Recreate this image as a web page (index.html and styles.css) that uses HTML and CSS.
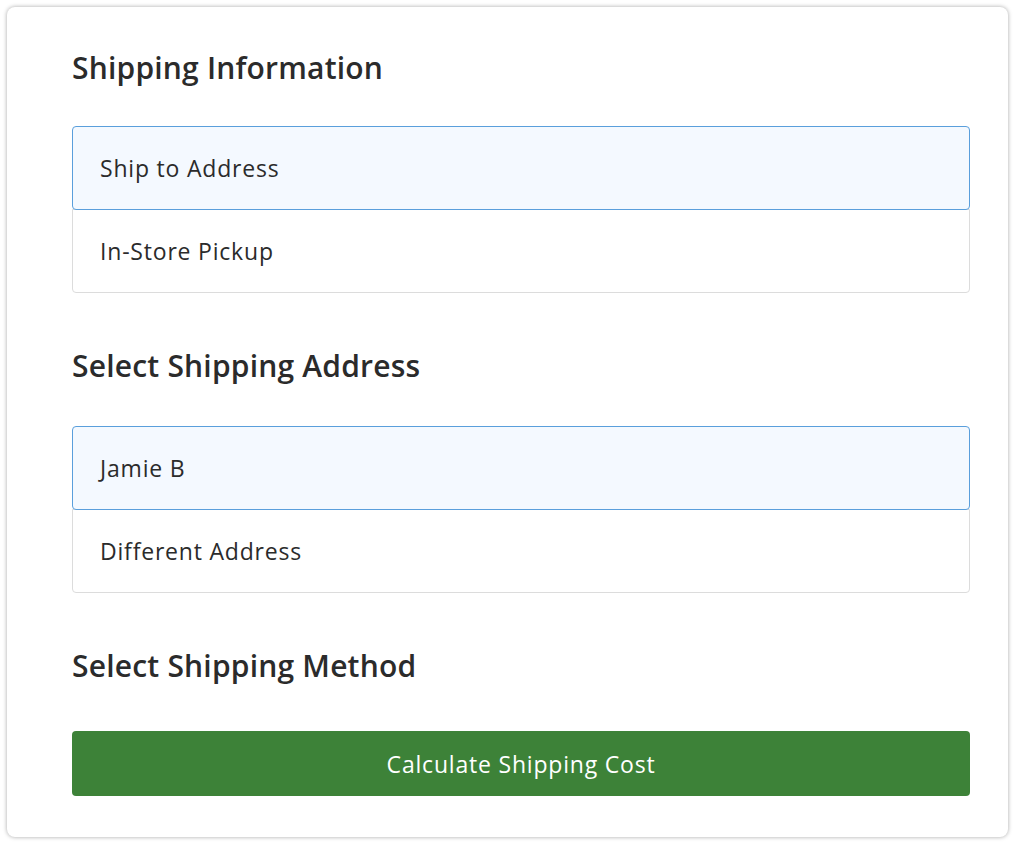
FILE: index.html
```html
<!DOCTYPE html>
<html lang="en">
<head>
<meta charset="utf-8">
<title>Shipping</title>
<link rel="stylesheet" href="styles.css">
</head>
<body>
<div class="card">
  <h2 class="heading h-first">Shipping Information</h2>
  <div class="list">
    <div class="item active">Ship to Address</div>
    <div class="item">In-Store Pickup</div>
  </div>
  <h2 class="heading h-second">Select Shipping Address</h2>
  <div class="list">
    <div class="item active">Jamie B</div>
    <div class="item">Different Address</div>
  </div>
  <h2 class="heading h-third">Select Shipping Method</h2>
  <button class="btn">Calculate Shipping Cost</button>
</div>
</body>
</html>
```

FILE: styles.css
```css
html, body {
  margin: 0;
  padding: 0;
  background: #ffffff;
}
body {
  padding: 7px 8px 8px 7px;
  font-family: "Open Sans", "Liberation Sans", sans-serif;
  color: #2b2b2b;
}
.card {
  background: #fff;
  border-radius: 8px;
  box-shadow: 0 0 4px rgba(0,0,0,0.35);
  padding: 43px 38px 41px 65px;
  height: 830px;
  box-sizing: border-box;
}
.heading {
  margin: 0;
  font-size: 30px;
  line-height: 36px;
  font-weight: 600;
  letter-spacing: 0.2px;
  color: #2b2b2b;
}
.h-first { margin-bottom: 40px; }
.h-second { margin-top: 55px; margin-bottom: 42px; }
.h-third { margin-top: 55px; margin-bottom: 47px; }
.list {
  display: flex;
  flex-direction: column;
}
.item {
  border: 1px solid #dcdcdc;
  padding: 0 27px;
  height: 84px;
  box-sizing: border-box;
  display: flex;
  align-items: center;
  font-size: 23px;
  letter-spacing: 0.8px;
  color: #2b2b2b;
  background: #fff;
}
.item + .item { margin-top: -1px; }
.item:first-child { border-radius: 4px 4px 0 0; }
.item:last-child { border-radius: 0 0 4px 4px; }
.item.active {
  background: #f4f9ff;
  border-color: #5a9fdc;
  position: relative;
  z-index: 1;
  border-radius: 4px;
}
.btn {
  display: block;
  width: 100%;
  height: 65px;
  border: none;
  border-radius: 4px;
  background: #3d8238;
  color: #fff;
  font-family: "Open Sans", "Liberation Sans", sans-serif;
  font-size: 23px;
  letter-spacing: 0.8px;
  cursor: pointer;
}
```
